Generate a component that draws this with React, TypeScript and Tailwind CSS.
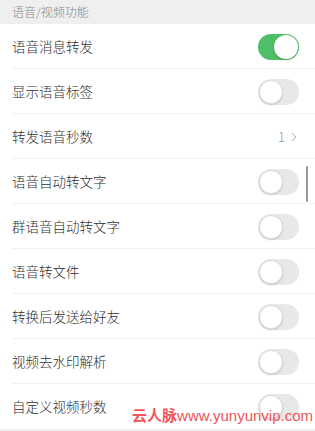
import React from "react";

const rows: { label: string; type: "on" | "off" | "value" }[] = [
  { label: "语音消息转发", type: "on" },
  { label: "显示语音标签", type: "off" },
  { label: "转发语音秒数", type: "value" },
  { label: "语音自动转文字", type: "off" },
  { label: "群语音自动转文字", type: "off" },
  { label: "语音转文件", type: "off" },
  { label: "转换后发送给好友", type: "off" },
  { label: "视频去水印解析", type: "off" },
  { label: "自定义视频秒数", type: "off" },
];

function Toggle({ on }: { on: boolean }) {
  return on ? (
    <div className="w-[41px] h-[26px] rounded-full bg-[#4fbe69] flex items-center justify-end pr-[1px]">
      <div className="w-[24px] h-[24px] rounded-full bg-white shadow-[0_1px_2px_rgba(0,0,0,0.2)]" />
    </div>
  ) : (
    <div className="w-[41px] h-[26px] rounded-full bg-[#e8e8e8] flex items-center pl-[1px]">
      <div className="w-[24px] h-[24px] rounded-full bg-white border border-[#dcdcdc] shadow-[0_1px_2px_rgba(0,0,0,0.15)]" />
    </div>
  );
}

export default function App() {
  return (
    <div
      className="relative w-[315px] h-[431px] overflow-hidden bg-white"
      style={{ fontFamily: '"Noto Sans CJK SC", "Noto Sans", sans-serif' }}
    >
      <div className="h-[24px] bg-[#efefef] flex items-center pl-[12px] text-[12px] text-[#888888] font-light">
        语音/视频功能
      </div>
      {rows.map((r, i) => (
        <div key={i} className="relative h-[45px] flex items-center pl-[12px] pr-[16px]">
          <span className="flex-1 text-[13.5px] text-[#2e2e2e] font-light">{r.label}</span>
          {r.type === "value" ? (
            <div className="flex items-center gap-[6px] text-[13px] text-[#999999] pr-[2px] font-light">
              <span>1</span>
              <svg width="6" height="10" viewBox="0 0 6 10" fill="none">
                <path d="M1 1l4 4-4 4" stroke="#b0b0b0" strokeWidth="1" />
              </svg>
            </div>
          ) : (
            <Toggle on={r.type === "on"} />
          )}
          {i < rows.length - 1 && (
            <div className="absolute left-[12px] right-0 bottom-0 h-px bg-[#f0f0f0]" />
          )}
        </div>
      ))}
      <div className="h-[10px] bg-[#efefef]" />
      <div className="absolute left-[306px] top-[166px] w-[2px] h-[36px] bg-[#9a9a9a] rounded" />
      <div
        className="absolute right-[2px] top-[406px] text-[15px] leading-[20px] text-[#f0555a] whitespace-nowrap"
        style={{ fontFamily: '"Liberation Sans", "Noto Sans CJK SC", sans-serif' }}
      >
        <span className="font-bold">云人脉</span>
        <span>www.yunyunvip.com</span>
      </div>
    </div>
  );
}
